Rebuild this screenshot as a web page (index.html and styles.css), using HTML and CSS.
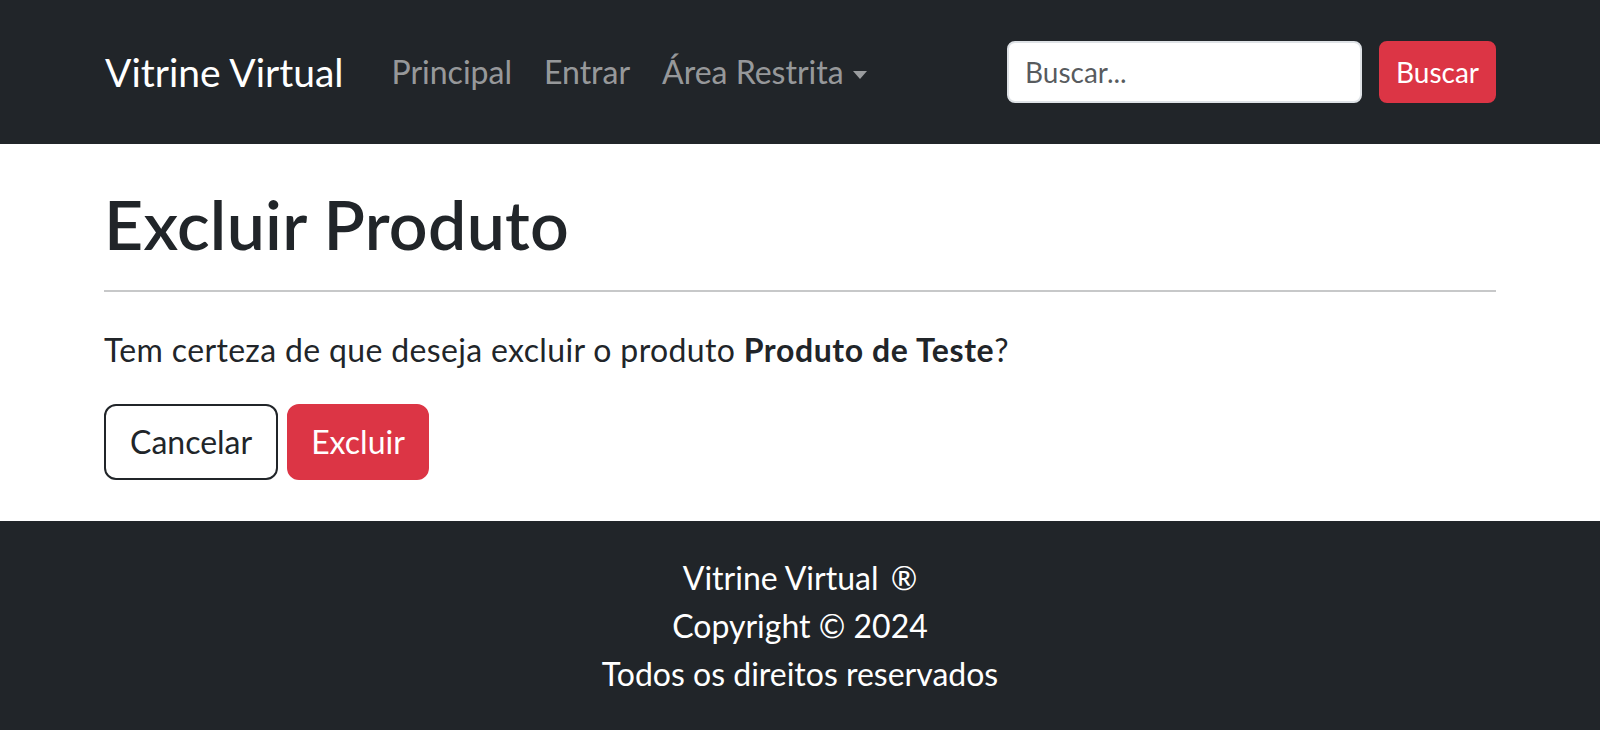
FILE: index.html
```html
<!DOCTYPE html>
<html lang="pt-BR">
<head>
<meta charset="utf-8">
<title>Excluir Produto - Vitrine Virtual</title>
<link rel="stylesheet" href="styles.css">
</head>
<body>
<nav class="navbar">
  <div class="container navbar-inner">
    <a class="brand" href="#">Vitrine Virtual</a>
    <ul class="nav-links">
      <li><a class="nav-link" href="#">Principal</a></li>
      <li><a class="nav-link" href="#">Entrar</a></li>
      <li><a class="nav-link dropdown-toggle" href="#">Área Restrita</a></li>
    </ul>
    <form class="search">
      <input class="search-input" type="search" placeholder="Buscar...">
      <button class="btn-search" type="button">Buscar</button>
    </form>
  </div>
</nav>
<main class="container main">
  <h1 class="title">Excluir Produto</h1>
  <hr class="divider">
  <p class="question">Tem certeza de que deseja excluir o produto <strong>Produto de Teste</strong>?</p>
  <div class="actions">
    <a class="btn btn-outline" href="#">Cancelar</a>
    <button class="btn btn-danger" type="button">Excluir</button>
  </div>
</main>
<footer class="footer">
  <div class="container footer-inner">
    <p class="footer-line">Vitrine Virtual <span class="reg">®</span></p>
    <p class="footer-line">Copyright © 2024</p>
    <p class="footer-line">Todos os direitos reservados</p>
  </div>
</footer>
</body>
</html>
```
FILE: styles.css
```css
* { box-sizing: border-box; }

html, body {
  margin: 0;
  padding: 0;
}

body {
  font-family: "Lato", "Liberation Sans", sans-serif;
  font-size: 32px;
  line-height: 1.5;
  color: #212529;
  background: #fff;
}

.container {
  max-width: 1440px;
  margin: 0 auto;
  padding: 0 24px;
}

/* Navbar */
.navbar {
  background: #212529;
  padding: 32px 0;
}

.navbar-inner {
  display: flex;
  align-items: center;
}

.brand {
  font-size: 39px;
  line-height: 60px;
  padding: 10px 0;
  margin-right: 32px;
  margin-left: 1px;
  color: #fff;
  text-decoration: none;
  white-space: nowrap;
}

.nav-links {
  display: flex;
  list-style: none;
  margin: 0 auto 0 0;
  padding: 0;
}

.nav-link {
  display: block;
  padding: 16px;
  color: rgba(255, 255, 255, 0.55);
  text-decoration: none;
  font-size: 32px;
  line-height: 48px;
}

.dropdown-toggle::after {
  content: "";
  display: inline-block;
  margin-left: 9px;
  vertical-align: 5px;
  border-top: 8px solid;
  border-left: 7.5px solid transparent;
  border-right: 7.5px solid transparent;
}

.search {
  display: flex;
  align-items: center;
  gap: 17px;
  margin: 0;
}

.search-input {
  width: 355px;
  height: 62px;
  padding: 8px 16px;
  font-family: inherit;
  font-size: 28px;
  line-height: 42px;
  color: #212529;
  background: #fff;
  border: 2px solid #dee2e6;
  border-radius: 8px;
  outline: none;
}

.search-input::placeholder {
  color: rgba(33, 37, 41, 0.75);
}

.btn-search {
  height: 62px;
  padding: 8px 15px;
  font-family: inherit;
  font-size: 28px;
  line-height: 42px;
  color: #fff;
  background: #dc3545;
  border: 2px solid #dc3545;
  border-radius: 8px;
  cursor: pointer;
}

/* Main */
.main {
  padding-top: 39px;
  padding-bottom: 41px;
}

.title {
  margin: 0;
  font-size: 68px;
  font-weight: 600;
  line-height: 1.2;
  letter-spacing: 0.3px;
}

.divider {
  margin: 25px 0 34px;
  border: 0;
  border-top: 2px solid #c7c8c9;
}

.question {
  margin: 0 0 30px;
  letter-spacing: 0.35px;
}

.question strong {
  font-weight: 700;
  letter-spacing: 0.6px;
}

.actions {
  display: flex;
  gap: 9px;
}

.btn {
  display: inline-block;
  padding: 12px 24px;
  font-family: inherit;
  font-size: 32px;
  line-height: 48px;
  border: 2px solid transparent;
  border-radius: 12px;
  text-decoration: none;
  cursor: pointer;
}

.btn-outline {
  color: #212529;
  border-color: #212529;
  background: transparent;
}

.btn-danger {
  padding-left: 22px;
  padding-right: 22px;
  color: #fff;
  background: #dc3545;
  border-color: #dc3545;
}

/* Footer */
.footer {
  background: #212529;
  color: #fff;
  padding: 33px 0 32px;
}

.footer-inner {
  text-align: center;
}

.footer-line {
  margin: 0;
  line-height: 48px;
}

.reg {
  margin-left: 4px;
}
```
